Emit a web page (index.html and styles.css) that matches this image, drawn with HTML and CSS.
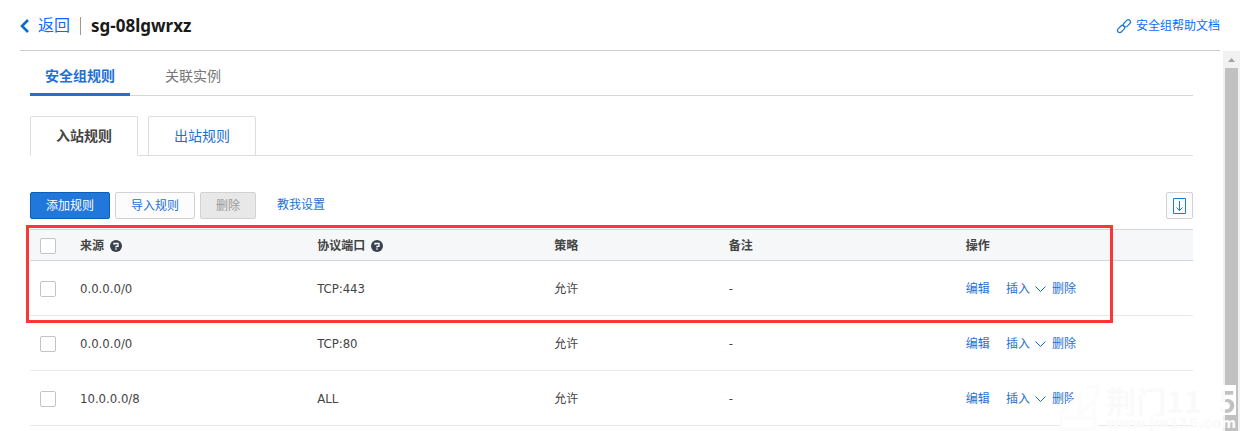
FILE: index.html
```html
<!DOCTYPE html>
<html lang="zh-CN">
<head>
<meta charset="utf-8">
<title>sg-08lgwrxz</title>
<link rel="stylesheet" href="styles.css">
</head>
<body>
<header class="topbar">
  <a class="back" href="#"><svg class="back-icon" viewBox="0 0 9 14"><path d="M8 1 2 7l6 6" fill="none" stroke="#0a6ccb" stroke-width="2.6"/></svg>返回</a>
  <h1 class="title">sg-08lgwrxz</h1>
  <a class="help" href="#"><svg class="help-icon" viewBox="0 0 14 14" fill="none" stroke="#1a7ad4" stroke-width="1.2"><rect x="5.700" y="2.200" width="8.400" height="4.400" rx="2.200" transform="rotate(-45 9.900 4.400)"/><rect x="-.1" y="7.800" width="8.400" height="4.400" rx="2.200" transform="rotate(-45 4.100 10)"/></svg>安全组帮助文档</a>
</header>
<div class="body">
  <main class="panel">
    <nav class="tabs">
      <a class="tab tab-active" href="#">安全组规则</a>
      <a class="tab" href="#">关联实例</a>
    </nav>
    <nav class="subtabs">
      <a class="subtab subtab-active" href="#">入站规则</a>
      <a class="subtab" href="#">出站规则</a>
    </nav>
    <div class="toolbar">
      <button class="btn btn-primary" type="button">添加规则</button>
      <button class="btn" type="button">导入规则</button>
      <button class="btn" type="button" disabled>删除</button>
      <a class="guide" href="#">教我设置</a>
      <button class="btn btn-icon" type="button" aria-label="下载"><svg class="download-icon" viewBox="0 0 13 16" fill="none" stroke="#1f78dc"><path d="M.5.5h12v15H.5zM6.500 3v10M3.500 9.500l3 3 3-3"/></svg></button>
    </div>
    <div class="table-wrap">
      <table class="rules">
        <colgroup><col class="col-check"><col><col><col class="col-policy"><col><col></colgroup>
        <thead>
          <tr>
            <th><input class="check" type="checkbox" aria-label="全选"></th>
            <th><span class="head">来源<svg class="tip" viewBox="0 0 12 12"><circle cx="6" cy="6" r="6" fill="#38424f"/><path d="M4 4.700V3.500h4v2.800H6V7.500M6 8.300v1.400" fill="none" stroke="#fff" stroke-width="1.3"/></svg></span></th>
            <th><span class="head">协议端口<svg class="tip" viewBox="0 0 12 12"><circle cx="6" cy="6" r="6" fill="#38424f"/><path d="M4 4.700V3.500h4v2.800H6V7.500M6 8.300v1.400" fill="none" stroke="#fff" stroke-width="1.3"/></svg></span></th>
            <th>策略</th>
            <th>备注</th>
            <th>操作</th>
          </tr>
        </thead>
        <tbody>
          <tr>
            <td><input class="check" type="checkbox" aria-label="选择 TCP:443"></td>
            <td class="value">0.0.0.0/0</td><td class="value">TCP:443</td><td>允许</td><td class="value">-</td>
            <td><div class="actions"><a href="#">编辑</a><a class="insert" href="#">插入<svg class="chevron" viewBox="0 0 11 7"><path d="m.5.5 5 5 5-5" fill="none" stroke="#0a6ccb"/></svg></a><a href="#">删除</a></div></td>
          </tr>
          <tr>
            <td><input class="check" type="checkbox" aria-label="选择 TCP:80"></td>
            <td class="value">0.0.0.0/0</td><td class="value">TCP:80</td><td>允许</td><td class="value">-</td>
            <td><div class="actions"><a href="#">编辑</a><a class="insert" href="#">插入<svg class="chevron" viewBox="0 0 11 7"><path d="m.5.5 5 5 5-5" fill="none" stroke="#0a6ccb"/></svg></a><a href="#">删除</a></div></td>
          </tr>
          <tr>
            <td><input class="check" type="checkbox" aria-label="选择 ALL"></td>
            <td class="value">10.0.0.0/8</td><td class="value">ALL</td><td>允许</td><td class="value">-</td>
            <td><div class="actions"><a href="#">编辑</a><a class="insert" href="#">插入<svg class="chevron" viewBox="0 0 11 7"><path d="m.5.5 5 5 5-5" fill="none" stroke="#0a6ccb"/></svg></a><a href="#">删除</a></div></td>
          </tr>
        </tbody>
      </table>
      <div class="highlight"></div>
    </div>
  </main>
  <div class="scrollbar"><svg class="arrow" viewBox="0 0 17 17"><path d="M5 11h7L8.500 7z" fill="#a3a3a3"/></svg><div class="thumb"></div></div>
</div>
<div class="watermark">
  <svg class="mark-logo" viewBox="0 0 44 46"><path d="M2 28 24 9 15 14 20 1h22v43H4V34z" fill="#fff"/><path d="M3 29 24 10v19L38 16v14M29 2h12v9M5 44V33h34v11z" fill="none" stroke="#fcfcfc" stroke-width="3"/></svg>
  <div class="mark-text">
    <div class="mark-name">荆门11<span class="mark-box"><span class="mark-five">5</span></span></div>
    <div class="mark-url">www.jm115.com</div>
  </div>
</div>
</body>
</html>
```
FILE: styles.css
```css
* { box-sizing: border-box; }
body {
  display: flex;
  flex-direction: column;
  height: 100vh;
  margin: 0;
  overflow: hidden;
  background: #fff;
  color: #444;
  font: 12px/18px "DejaVu Sans Condensed", "Noto Sans CJK SC", sans-serif;
}
a { color: #1f70d4; text-decoration: none; }
svg { display: block; flex: none; }
.topbar {
  display: flex;
  flex: none;
  align-items: center;
  height: 51px;
  margin: 0 20px;
  padding-top: 1px;
  border-bottom: 1px solid #ccc;
}
.back {
  display: flex;
  align-items: center;
  gap: 9px;
  padding-right: 10px;
  border-right: 1px solid #999;
  color: #0a6cff;
  font-size: 16px;
}
.back-icon { width: 9px; height: 14px; }
.title {
  margin: 0 0 0 10px;
  color: #1a1a1a;
  font: bold 17px/20px "Noto Sans", sans-serif;
}
.help {
  display: flex;
  align-items: center;
  gap: 5px;
  margin-left: auto;
  color: #0a6cff;
}
.help-icon { width: 14px; height: 14px; overflow: visible; }
.body { display: flex; flex: 1; min-height: 0; }
.panel { flex: 1; min-width: 0; padding: 0 30px; overflow: hidden; }
.tabs { display: flex; height: 45px; border-bottom: 1px solid #d6d6d6; font-size: 14px; }
.tab { height: 45px; padding: 16px 20px 0 35px; color: #777; }
.tab-active { padding: 16px 15px 0; border-bottom: 3px solid #1f73d8; color: #1f70d4; font-weight: bold; }
.subtabs { display: flex; gap: 10px; height: 40px; margin-top: 20px; border-bottom: 1px solid #ddd; font-size: 14px; }
.subtab {
  width: 108px;
  height: 40px;
  padding-top: 10px;
  border: 1px solid #ddd;
  border-radius: 2px 2px 0 0;
  text-align: center;
}
.subtab-active { border-bottom-color: #fff; color: #444; font-weight: bold; }
.toolbar { display: flex; gap: 5px; margin-top: 36px; }
.btn {
  height: 27px;
  padding: 0 15px;
  border: 1px solid #d2d2d2;
  border-radius: 2px;
  background: #fcfcfc;
  color: #1f70d4;
  font: inherit;
}
.btn-primary { border-color: #0a5fb8; background: #2277da; color: #fff; }
.btn:disabled { background: #e8e8e8; color: #999; }
.guide { padding: 4px 0 0 16px; }
.btn-icon { margin-left: auto; padding: 0 6px; }
.download-icon { width: 13px; height: 16px; }
.table-wrap { position: relative; margin-top: 10px; }
.rules { width: 100%; border-collapse: separate; border-spacing: 0; table-layout: fixed; }
.col-check { width: 40px; }
.col-policy { width: 15%; }
th, td { padding: 2px 10px 0; text-align: left; vertical-align: middle; }
th { height: 32px; border-top: 1px solid #d0d4de; border-bottom: 1px solid #d0d4de; background: #f6f7f9; }
td { height: 55px; border-bottom: 1px solid #e4e8f0; }
.value { font-size: 13px; }
.head { display: flex; align-items: center; gap: 6px; }
.tip { width: 12px; height: 12px; }
.check {
  display: block;
  width: 16px;
  height: 16px;
  margin: 0;
  border: 1px solid #c4c4c4;
  border-radius: 2px;
  background: #fff;
  appearance: none;
}
.check:checked { background: #2277da; }
.actions { display: flex; align-items: center; gap: 6px; }
.insert { display: flex; align-items: center; gap: 5px; margin-left: 10px; }
.chevron { width: 11px; height: 7px; }
.highlight {
  position: absolute;
  top: -4px;
  right: 80px;
  left: -4px;
  height: 98px;
  border: 3px solid #fc3535;
  pointer-events: none;
}
.scrollbar { display: flex; flex-direction: column; flex: none; width: 17px; background: #f1f1f1; }
.arrow { width: 17px; height: 17px; }
.thumb { flex: 1; margin: 0 2px; background: #c1c1c1; }
.watermark {
  position: absolute;
  right: 4px;
  bottom: 0;
  display: flex;
  align-items: flex-start;
  gap: 6px;
  color: #fafafa;
  pointer-events: none;
}
.mark-logo { width: 44px; height: 46px; }
.mark-name { display: flex; justify-content: space-between; font: bold 30px/30px "Noto Sans CJK SC", sans-serif; }
.mark-box { background: #fff; }
.mark-five {
  background: linear-gradient(90deg, #fafafa 7px, #c1c1c1 7px);
  background-clip: text;
  color: transparent;
}
.mark-url { font: bold 14px/16px "DejaVu Sans", sans-serif; }
```
